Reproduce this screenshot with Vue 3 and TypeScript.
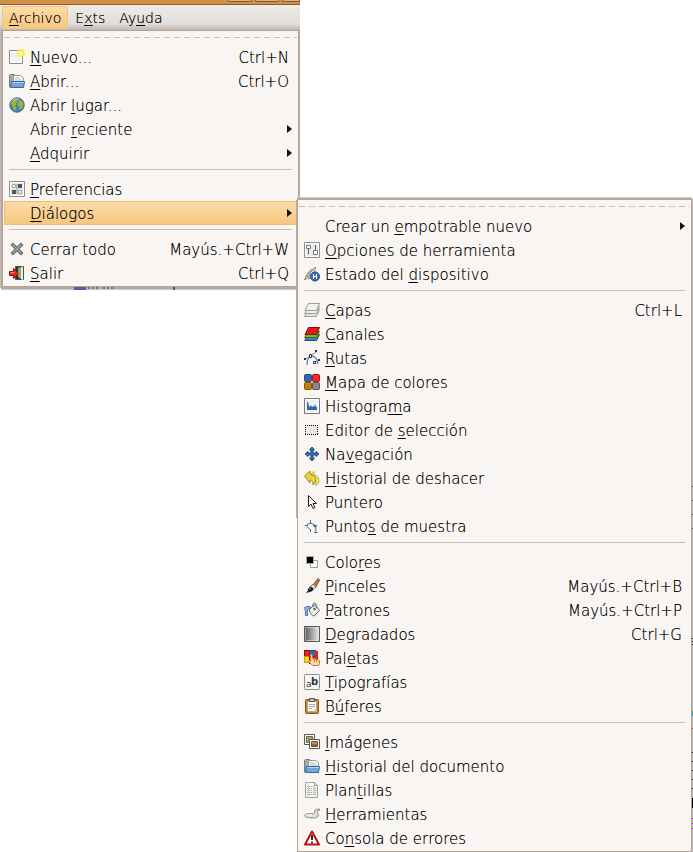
<script setup lang="ts">
interface Entry {
  /* An underscore precedes the mnemonic letter. */
  label: string
  icon?: string
  keys?: string
  submenu?: boolean
  active?: boolean
}

const menubar: Entry[] = [
  { label: '_Archivo', active: true },
  { label: 'E_xts' },
  { label: 'Ay_uda' },
]

const fileMenu: Entry[][] = [
  [
    { label: '_Nuevo...', icon: 'new', keys: 'Ctrl+N' },
    { label: '_Abrir...', icon: 'open', keys: 'Ctrl+O' },
    { label: 'Abrir _lugar...', icon: 'globe' },
    { label: 'Abrir _reciente', submenu: true },
    { label: '_Adquirir', submenu: true },
  ],
  [
    { label: '_Preferencias', icon: 'prefs' },
    { label: '_Diálogos', submenu: true, active: true },
  ],
  [
    { label: 'Cerrar todo', icon: 'close', keys: 'Mayús.+Ctrl+W' },
    { label: '_Salir', icon: 'quit', keys: 'Ctrl+Q' },
  ],
]

const dialogsMenu: Entry[][] = [
  [
    { label: 'Crear un _empotrable nuevo', submenu: true },
    { label: '_Opciones de herramienta', icon: 'options' },
    { label: 'Estado del _dispositivo', icon: 'device' },
  ],
  [
    { label: '_Capas', icon: 'layers', keys: 'Ctrl+L' },
    { label: '_Canales', icon: 'channels' },
    { label: '_Rutas', icon: 'paths' },
    { label: '_Mapa de colores', icon: 'colormap' },
    { label: 'Histogra_ma', icon: 'histogram' },
    { label: 'Editor de _selección', icon: 'selection' },
    { label: 'Na_vegación', icon: 'navigation' },
    { label: '_Historial de deshacer', icon: 'undo' },
    { label: 'Puntero', icon: 'pointer' },
    { label: 'Punto_s de muestra', icon: 'sample' },
  ],
  [
    { label: 'Colo_res', icon: 'colors' },
    { label: '_Pinceles', icon: 'brush', keys: 'Mayús.+Ctrl+B' },
    { label: '_Patrones', icon: 'bucket', keys: 'Mayús.+Ctrl+P' },
    { label: '_Degradados', icon: 'gradient', keys: 'Ctrl+G' },
    { label: 'Pal_etas', icon: 'palette' },
    { label: '_Tipografías', icon: 'fonts' },
    { label: 'B_úferes', icon: 'clipboard' },
  ],
  [
    { label: '_Imágenes', icon: 'images' },
    { label: '_Historial del documento', icon: 'open' },
    { label: 'Plan_tillas', icon: 'template' },
    { label: '_Herramientas', icon: 'tools' },
    { label: 'Co_nsola de errores', icon: 'warning' },
  ],
]

const menus = [
  { id: 'file', name: 'Archivo', groups: fileMenu },
  { id: 'dialogs', name: 'Diálogos', groups: dialogsMenu },
]

function parts(label: string) {
  const i = label.indexOf('_')
  return i < 0
    ? { before: label, key: '', after: '' }
    : { before: label.slice(0, i), key: label[i + 1], after: label.slice(i + 2) }
}

const icons: Record<string, string> = {
  new: `<path d="M.5 1.5h13v13H.5z" fill="#f1f1f1" stroke="#8a8c88"/>
    <path d="M1.5 2.5h11v11h-11z" fill="none" stroke="#fff"/>
    <circle cx="12" cy="4" r="4" fill="#f6ee4a" opacity=".9"/><circle cx="12" cy="4" r="1.7" fill="#fffbb0"/>`,
  open: `<path d="M.5 14V2.5l1-1h4l1.5 1.5h1V12z" fill="#aaa" stroke="#777975"/>
    <path d="M4.5 2.5h7l3 2.5v6h-10z" fill="#fafafa" stroke="#989a96"/>
    <path d="M6 5h5M6 7h7" stroke="#bbb"/>
    <path d="M2.5 8.5h13l-1 6h-13z" fill="#73a4d8" stroke="#3465a4"/><path d="M3 9.5h12" stroke="#b4d0ee"/>`,
  globe: `<circle cx="8" cy="8" r="7.2" fill="#4a7ec0" stroke="#45608f"/>
    <path d="M2 5l3-3 3 .5 1 2-2 1 .5 2-2 1 2 2-1 3-2-1-.5-3-2-2zM10 3l3 1 1.5 3-.5 3-2 3-1.5-.5-.5-3-1.5-2 1-2z" fill="#9ab532"/>
    <path d="M3 3.5q3-2.5 7-1.5" stroke="#bed0e6"/>`,
  prefs: `<path d="M.5 .5h15v15h-15z" fill="#fff" stroke="#8c8e8a"/><path d="M2 2h12v12H2z" fill="#e5e7e5"/>
    <path d="M9 3h4v4H9zM3 9h4v4H3z" fill="#505756"/><path d="M3.5 3.5h3v3h-3zM9.5 9.5h3v3h-3z" fill="#f6f6f6" stroke="#a2a6a3"/>
    <path d="M8 3v10" stroke="#8a908e"/>`,
  close: `<path d="M4 4l8 8M12 4l-8 8" stroke="#666864" stroke-width="3.5" stroke-linecap="square"/>
    <path d="M4 4l8 8M12 4l-8 8" stroke="#a0a29e" stroke-width="1.5" stroke-linecap="square"/>`,
  quit: `<path d="M6.5 1.5h8v13h-8z" fill="#26382a" stroke="#4b504b"/><path d="M9 3l3-1v12l-3-2z" fill="#8bad68"/>
    <path d="M12 2.5l2-1v13.5l-2-1z" fill="#eee"/><path d="M.5 6.5h4V3.5l5 5-5 5v-3h-4z" fill="#e22" stroke="#9c0b0b"/>
    <path d="M1.5 7.5h4" stroke="#ff8b7c"/>`,
  options: `<path d="M.5 .5h15v15h-15z" fill="#fff" stroke="#8c8e8a"/><path d="M2 2h12v12H2z" fill="#eaebea"/>
    <path d="M4.5 7v5M11.5 3v6" stroke="#555753"/><path d="M2.5 3.5h4v3h-4zM9.5 8.5h4v4h-4z" fill="#fff" stroke="#777975"/>`,
  device: `<path d="M.5 14q1-6 7-11l1 1q-5 3-6 9zM4 13q1-7 7.5-12l-1 5-4 6z" fill="#e8e8e2" stroke="#888a85"/>
    <circle cx="11" cy="10.5" r="4.5" fill="#3971b5" stroke="#204a87"/><path d="M9.5 8v5M12.5 8v5M9.5 10.5h3" stroke="#fff"/>`,
  layers: `<path d="M4 7.5h11.5l-3 7H.7z" fill="#e2e3e0" stroke="#9c9e99"/>
    <path d="M4 4.5h11.5l-3 7H.7z" fill="#eeeeec" stroke="#9c9e99"/>
    <path d="M4.5 1.5h11l-3 7H1z" fill="#f0f1ef" stroke="#9c9e99"/>`,
  channels: `<path d="M4 8.5h11.5l-3 6H.7z" fill="#3f7ac4" stroke="#204a87"/>
    <path d="M4 5.5h11.5l-3 6H.7z" fill="#73c216" stroke="#3c6c0a"/>
    <path d="M4.5 1.5h11l-3 7H1z" fill="#e51b1b" stroke="#8f0b0b"/>`,
  paths: `<path d="M3 15q0-7 4-9M7 6q6 0 7 8" stroke="#5e83b7" stroke-width="1.3"/>
    <path d="M1 9.5L12 2M9 14l5-4" stroke="#8a8c88"/><path d="M0 8h2v2H0zM11 0h2v2h-2zM14 9h2v2h-2z" fill="#2e3436"/>
    <path d="M5.5 4.5h2v3h-2zM9.5 11.5h2v2h-2z" fill="#fff" stroke="#2e3436"/>`,
  colormap: `<rect x=".5" y=".5" width="7" height="7" rx="1" fill="#3465a4" stroke="#294d7c"/>
    <rect x="8.5" y=".5" width="7" height="7" rx="1" fill="#ef2929" stroke="#b80b0b"/>
    <rect x=".5" y="8.5" width="7" height="7" rx="1" fill="#c17d11" stroke="#8f5902"/>
    <rect x="8.5" y="8.5" width="7" height="7" rx="1" fill="#888a85" stroke="#555753"/>`,
  histogram: `<path d="M.5 .5h15v15h-15z" fill="#fff" stroke="#777975"/><path d="M2 2h12v12H2z" fill="#edf0f4"/>
    <path d="M3 12V4h1l1 4 1 1 1-2 1 2 1-1 1 1 1-3 1 3 1 0v3z" fill="#3465a4"/>`,
  selection: `<path d="M3 4h10v8H3z" fill="#e6e6e4"/>
    <path d="M1 3.5h13M1 12.5h13M1.5 3v10M13.5 3v10" stroke="#111" stroke-dasharray="1 1" shape-rendering="crispEdges"/>`,
  navigation: `<path d="M8 1l2.5 3H9v3h3V5.5L15 8l-3 2.5V9H9v3h1.5L8 15l-2.5-3H7V9H4v1.5L1 8l3-2.5V7h3V4H5.5z" fill="#3a6cb0" stroke="#204a87"/>`,
  undo: `<path d="M6 5.5l4-4v3q5 2 5 6 0 3-3 5 1-5-2-6v3z" fill="#f3ed9b" stroke="#b9a936"/>
    <path d="M.5 6l5.5-5v3q5 1 6 5 0 4-3 6 0-5-3-5v3z" fill="#edd43d" stroke="#a48c08"/>`,
  pointer: `<path d="M4.5 1.5v11l2.5-2.5 2 4.5 2-1-2-4h3.5z" fill="#fff" stroke="#222"/>`,
  sample: `<path d="M3 6.5q3-3 7 0l1 2M3 8.5l3 3M6.5 2v3.5M1 7.5h3M9 7.5h4M6.5 11v3" stroke="#47698f"/>
    <text x="9" y="15" font-family="DejaVu Sans" font-size="8" font-weight="400" fill="#2f537c">1</text>`,
  colors: `<path d="M6.5 6.5h7v7h-7z" fill="#fff" stroke="#999b97"/><path d="M2.5 2.5h7v7h-7z" fill="#000" stroke="#aaa"/>`,
  brush: `<path d="M9 7l5-6.5L15.5 2l-4 7.5z" fill="#bd8757" stroke="#71411b"/><path d="M6 9l3-3 3 3-2.5 2.5z" fill="#ddd" stroke="#777"/>
    <path d="M1 15q3-1 3-4 2-4 5-1 2 4-8 5z" fill="#222"/><path d="M5 11l2-1" stroke="#888"/>`,
  bucket: `<path d="M5 7.5l6-5 4.5 6-5.5 5.5q-3 0-5-6.5z" fill="#e9ebe8" stroke="#696c68"/>
    <path d="M9 5q-1-4 1.5-4 2 0 2 5" stroke="#666"/><circle cx="10.5" cy="7" r="1.3" fill="#666"/>
    <path d="M6 4.5Q2 4 .5 5.5q1 1 1 8h2V8q1-2 3-1.5z" fill="#8db2dc" stroke="#4d76ac"/>`,
  gradient: `<defs><linearGradient id="gradient-fill"><stop stop-color="#555"/><stop offset="1" stop-color="#eee"/></linearGradient></defs>
    <path d="M.5 .5h15v15h-15z" fill="url(#gradient-fill)" stroke="#555753"/><path d="M1.5 1.5h13v13h-13z" stroke="#eee" opacity=".5"/>`,
  palette: `<rect x=".5" y=".5" width="5" height="6" fill="#e82020" stroke="#a40000"/><rect x="5.5" y=".5" width="6" height="6" fill="#3465a4" stroke="#204a87"/>
    <rect x=".5" y="6.5" width="5" height="6" fill="#f6d622" stroke="#c4a000"/><rect x="5.5" y="6.5" width="8" height="7" fill="#d33" stroke="#a40000"/>
    <path d="M11 1v6h3V1z" fill="#e82020"/>
    <path d="M6.5 4.5q1.5-1 2 1v3l6 1q1.5 1 1 4l-1 2h-6l-4-4q1-1.5 2 0z" fill="#fbd6a8" stroke="#c17d31"/><path d="M10.5 9v3M12.5 9v3" stroke="#c17d31"/>`,
  fonts: `<rect x=".5" y=".5" width="15" height="15" rx="1" fill="#f6f6f5" stroke="#8c8e8a"/>
    <text x="2" y="13" font-family="DejaVu Sans" font-size="9" font-weight="400" fill="#303638">a</text>
    <text x="7" y="11" font-family="DejaVu Sans" font-size="10" font-weight="bold" fill="#303638">b</text>`,
  clipboard: `<rect x="1.5" y="1.5" width="13" height="14" rx="1" fill="#c88324" stroke="#8f5902"/>
    <path d="M3.5 3.5h9v10h-9z" fill="#fafafa" stroke="#a8aaa5"/><path d="M5.5 .5h5v3h-5z" fill="#bbb" stroke="#555753"/>
    <path d="M5 6.5h6M5 8.5h6M5 10.5h3" stroke="#aaa"/><path d="M9 13.5l3.5-3.5v3.5z" fill="#ccc"/>`,
  images: `<path d="M.5 .5h10v10h-10z" fill="#fff" stroke="#555753"/><path d="M2.5 2.5h6v6h-6z" fill="#b2a04a" stroke="#666"/>
    <path d="M5.5 5.5h10v9h-10z" fill="#fff" stroke="#555753"/><path d="M7.5 7.5h6v5h-6z" fill="#b69a36" stroke="#555"/><path d="M8 10h5v2H8z" fill="#c44c35"/>`,
  template: `<path d="M1.5 .5h9l3 3v12h-12z" fill="#f7f7f6" stroke="#a1a39e"/><path d="M10.5 .5v3h3" fill="#ddd" stroke="#a1a39e"/>
    <path d="M3 4.5h7M3 6.5h9M3 8.5h9M3 10.5h9M3 12.5h9" stroke="#aaa" stroke-dasharray="1 1"/><path d="M4.5 3v11M10.5 5v9" stroke="#bbb" stroke-dasharray="2 1"/>`,
  tools: `<path d="M.5 9.5q1-2 6-2l3 .5q1.5-1 1-3 0-2 3-2h2v1.5h-2q-1 0 0 2l1 2.5q0 3-6 3Q1 12 .5 9.5z" fill="#dcddda" stroke="#92948f"/><path d="M2 9.5q3-1.5 6 0" stroke="#fff"/>`,
  warning: `<path d="M8 1.5L15 14.5H1z" fill="#fff" stroke="#c01010" stroke-width="2" stroke-linejoin="round"/>
    <path d="M8 5v5M8 11.5v2" stroke="#2e3436" stroke-width="2"/>`,
}
</script>

<template>
  <main class="desktop">
    <div class="window">
      <div class="titlebar"><i></i><i></i><i></i></div>
      <nav class="menubar">
        <button v-for="m in menubar" :key="m.label" type="button" class="top" :class="{ active: m.active }">
          {{ parts(m.label).before }}<u>{{ parts(m.label).key }}</u>{{ parts(m.label).after }}
        </button>
      </nav>
    </div>

    <div v-for="menu in menus" :key="menu.id" class="menu" :class="menu.id" role="menu" :aria-label="menu.name">
      <div class="tearoff"></div>
      <template v-for="(group, g) in menu.groups" :key="g">
        <hr v-if="g > 0" />
        <button
          v-for="e in group"
          :key="e.label"
          type="button"
          role="menuitem"
          class="row"
          :class="{ active: e.active }"
        >
          <svg v-if="e.icon" class="icon" viewBox="0 0 16 16" fill="none" aria-hidden="true" v-html="icons[e.icon]"></svg>
          <span v-else class="icon"></span>
          <span class="label">{{ parts(e.label).before }}<u>{{ parts(e.label).key }}</u>{{ parts(e.label).after }}</span>
          <kbd v-if="e.keys">{{ e.keys }}</kbd>
          <span v-if="e.submenu" class="arrow"></span>
        </button>
      </template>
    </div>
  </main>
</template>

<style>
body {
  margin: 0;
  background: #fff;
}
</style>

<style scoped>
.desktop {
  display: grid;
  grid-template-columns: 297px 1fr;
  align-items: start;
  font: 200 15px/24px "DejaVu Sans", sans-serif;
  color: #000;
}

.window {
  display: flex;
  flex-direction: column;
  grid-area: 1 / 1;
  width: 300px;
}

.titlebar {
  display: flex;
  justify-content: flex-end;
  gap: 3px;
  height: 4px;
  background: #d38e45;
  border-bottom: 1px solid #8c5f33;
}

.titlebar i {
  box-sizing: border-box;
  width: 24px;
  height: 2px;
  border: 1px solid #805a35;
  border-top: 0;
  border-radius: 0 0 3px 3px;
  background: #d9b184;
}

.titlebar i:last-child {
  width: 18px;
}

.menubar {
  display: flex;
  height: 25px;
  padding: 0 2px;
  background: linear-gradient(#efebe7, #e2ddd9 75%, #bdb5af);
  font-size: 14px;
}

button {
  margin: 0;
  border: 0;
  background: none;
  color: inherit;
  font: inherit;
  text-align: left;
}

u {
  text-decoration-thickness: 1px;
  text-underline-offset: 2px;
  text-decoration-skip-ink: none;
}

.top,
.label,
kbd {
  text-shadow: 0 0 0 #0009;
}

.top {
  height: 24px;
  margin-top: 1px;
  padding: 0 7px;
}

.top.active {
  border-radius: 2px 2px 0 0;
  background: linear-gradient(#fddcaa, #f5c67d);
  box-shadow: inset 0 0 0 1px #f5c278;
}

.menu {
  position: relative;
  padding: 1px;
  border: 1px solid #b5a294;
  background: #f8f5f2;
}

.file {
  grid-area: 1 / 1;
  width: 293px;
  margin: 30px 0 0 2px;
  box-shadow: 0 1px 0 1px #b3aba5, 0 2px 0 1px #cbc7c4, -1px 0 0 1px #c2bab4;
}

/* Toolbar fragments that peek out below the open menu */
.file::after {
  content: "";
  position: absolute;
  top: 100%;
  left: 71px;
  width: 101px;
  height: 3px;
  margin-top: 1px;
  background:
    linear-gradient(#4a5fa5, #4a5fa5) 0 0 / 12px 3px no-repeat,
    repeating-linear-gradient(90deg, #777 0 2px, #bbb 2px 4px) 14px 0 / 11px 2px no-repeat,
    repeating-linear-gradient(90deg, #777 0 2px, #bbb 2px 4px) 29px 0 / 10px 2px no-repeat,
    linear-gradient(#4c5278, #4c5278) 100% 0 / 2px 3px no-repeat;
}

.dialogs {
  z-index: 1;
  grid-area: 1 / 2;
  margin: 199px 1px 0 0;
  box-shadow: 0 -1px 0 #b3aeaa, 0 -2px 0 #c9c7c5, 1px 0 0 #bfb9b5;
}

/* Edge of the covered window to the left of the menu */
.dialogs::before {
  content: "";
  position: absolute;
  top: 0;
  left: -2px;
  width: 1px;
  height: 318px;
  background: #b9b0a9;
}

/* Content of the covered window showing at the right edge */
.dialogs::after {
  content: "";
  position: absolute;
  top: 286px;
  right: -2px;
  width: 1px;
  height: 348px;
  background:
    repeating-linear-gradient(#555 0 1px, transparent 1px 14px) 0 0 / 1px 56px no-repeat,
    repeating-linear-gradient(#222 0 1px, transparent 1px 3px) 0 152px / 1px 9px no-repeat,
    linear-gradient(#2aa0a0, #2aa0a0) 0 225px / 1px 5px no-repeat,
    linear-gradient(#b33, #b33) 0 242px / 1px 1px no-repeat,
    repeating-linear-gradient(#111 0 1px, transparent 1px 9px) 0 266px / 1px 44px no-repeat,
    linear-gradient(#000, #000) 0 312px / 1px 10px no-repeat,
    repeating-linear-gradient(#d0c 0 1px, transparent 1px 5px) 0 332px / 1px 11px no-repeat;
}

.tearoff {
  height: 13px;
  background: repeating-linear-gradient(90deg, #c5c1be 0 6px, transparent 6px 10px) 0 5px / 100% 1px no-repeat;
}

.row {
  display: flex;
  align-items: center;
  gap: 5px;
  width: 100%;
  height: 24px;
  padding: 0 5px;
  white-space: nowrap;
}

.row.active {
  border-radius: 2px;
  background: linear-gradient(#fddcaa, #f5c67d);
  box-shadow: inset 0 0 0 1px #f0bc6e;
}

.icon {
  flex: none;
  width: 16px;
  height: 16px;
}

.label,
kbd {
  padding-top: 2px;
}

.label {
  flex: 1;
}

kbd {
  margin-right: 3px;
  font: inherit;
}

.arrow {
  border-left: 5px solid #111;
  border-block: 4px solid transparent;
}

hr {
  height: 1px;
  margin: 4px 5px 7px;
  border: 0;
  background: #c4bfbb;
}
</style>
